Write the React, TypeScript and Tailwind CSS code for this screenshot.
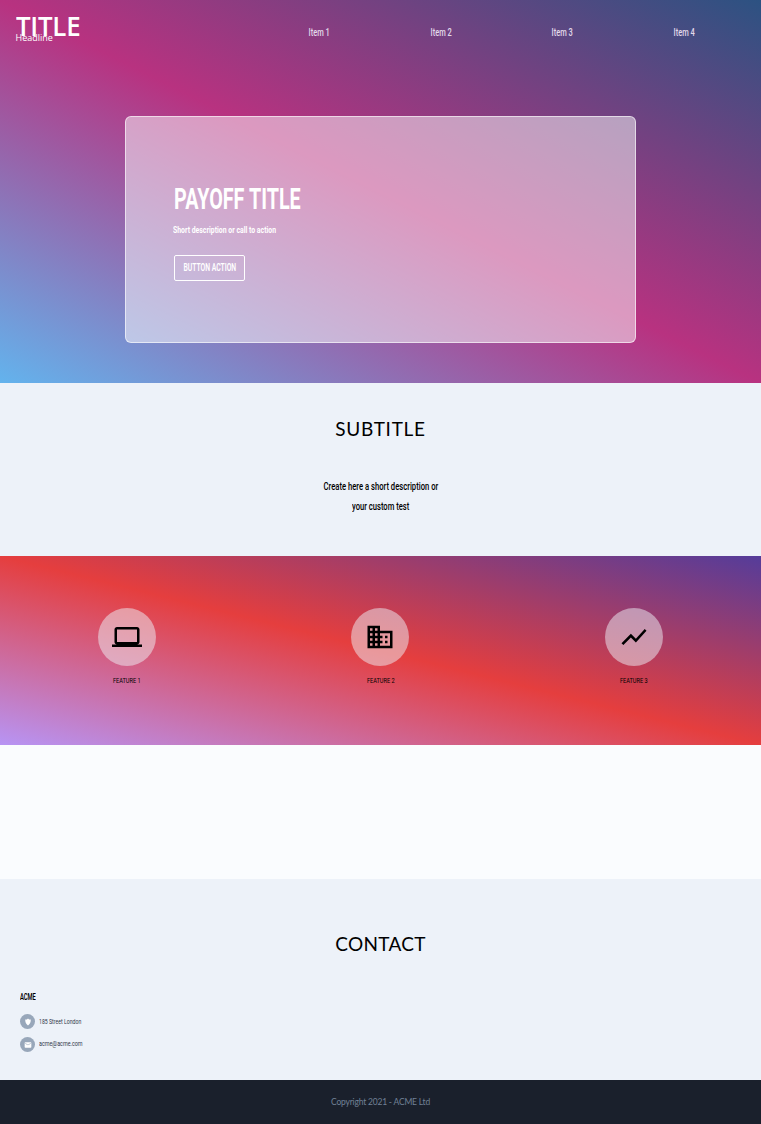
import React from "react";
import { MdLaptop, MdBusiness, MdShowChart, MdEmail } from "react-icons/md";

const condensed = "inline-block whitespace-nowrap font-['Roboto']";

const navItems = ["Item 1", "Item 2", "Item 3", "Item 4"];
const features = [
  { label: "FEATURE 1", Icon: MdLaptop },
  { label: "FEATURE 2", Icon: MdBusiness },
  { label: "FEATURE 3", Icon: MdShowChart },
];

function ShieldIcon() {
  return (
    <svg viewBox="0 0 20 20" className="h-2 w-2" fill="currentColor">
      <path d="M10 19C5 15 3 11 3 4q5 0 7-3 2 3 7 3c0 7-2 11-7 15Z" />
    </svg>
  );
}

export default function App() {
  return (
    <div className="h-[1124px] w-full overflow-hidden bg-[#fafcfe] font-['Roboto',sans-serif] text-black">
      <header className="flex h-[383px] flex-col bg-[linear-gradient(to_top_right,#63b3ed,#b83280,#2c5282)] text-white">
        <nav className="flex h-[116.4px] items-start">
          <div className="w-[258.5px] pt-[10px] pl-[15.5px] font-['Open_Sans']">
            <div className="h-[23px] origin-left scale-x-[0.96] text-[27px] leading-[31px] font-semibold tracking-[-0.3px]">TITLE</div>
            <div className="text-[9px] leading-[10px] font-medium">Headline</div>
          </div>
          <ul className="flex w-[488px] pt-[26px] text-[#e2d9ea]">
            {navItems.map((item) => (
              <li key={item} className="w-[121.6px] text-center text-[10px] leading-[14px] font-medium">
                <span className={`${condensed} scale-x-[0.75]`}>{item}</span>
              </li>
            ))}
          </ul>
        </nav>
        <div className="mx-auto flex h-[227px] w-[511px] flex-col items-start rounded-[6px] border border-white/60 bg-white/50 pt-[65px] pl-12">
          <h1 className={`${condensed} origin-left scale-x-[0.682] text-[29px] leading-[34px] font-bold`}>PAYOFF TITLE</h1>
          <p className={`${condensed} mt-[7px] -ml-px origin-left scale-x-[0.725] text-[9.5px] leading-[14px] font-bold`}>
            Short description or call to action
          </p>
          <button className="mt-[17.5px] flex h-[26px] w-[71px] items-center justify-center rounded-[2px] border border-white pt-px text-[10px] leading-[24px] font-semibold">
            <span className={`${condensed} scale-x-[0.68]`}>BUTTON ACTION</span>
          </button>
        </div>
      </header>

      <section className="flex h-[173px] flex-col items-center bg-[#edf2f9] pt-[34px]">
        <h2 className="font-['Lato'] text-[19px] leading-6 tracking-[0.7px]">SUBTITLE</h2>
        <div className="mt-[36px] text-center text-[10px] leading-5 font-medium">
          <div><span className={`${condensed} scale-x-[0.765]`}>Create here a short description or</span></div>
          <div><span className={`${condensed} scale-x-[0.76]`}>your custom test</span></div>
        </div>
      </section>

      <section className="grid h-[189px] grid-cols-3 bg-[linear-gradient(to_top_right,#b794f4,#e53e3e,#553c9a)] pt-[51.5px]">
        {features.map(({ label, Icon }) => (
          <div key={label} className="flex flex-col items-center">
            <div className="flex h-[58px] w-[58px] items-center justify-center rounded-full bg-[#edf2f7]/50">
              <Icon size={30} />
            </div>
            <span className={`${condensed} mt-[9px] scale-x-[0.7] text-[8px] leading-3`}>{label}</span>
          </div>
        ))}
      </section>

      <section className="h-[134px]" />

      <section className="flex h-[201px] flex-col bg-[#edf2f9] pt-[53px]">
        <h2 className="text-center font-['Lato'] text-[19px] leading-6 tracking-[0.3px]">CONTACT</h2>
        <div className="flex flex-col items-start pt-[35px] pl-5">
          <span className={`${condensed} origin-left scale-x-[0.64] text-[9px] leading-3 font-semibold`}>ACME</span>
          <div className="mt-[11.4px] flex items-center gap-1">
            <span className="flex h-[15px] w-[15px] items-center justify-center rounded-full bg-[#98a7ba] text-white"><ShieldIcon /></span>
            <span className={`${condensed} origin-left scale-x-[0.74] text-[7px] leading-[10px] text-[#2d3748]`}>185 Street London</span>
          </div>
          <div className="mt-2 flex items-center gap-1">
            <span className="flex h-[15px] w-[15px] items-center justify-center rounded-full bg-[#98a7ba] text-white"><MdEmail size={8} /></span>
            <span className={`${condensed} -mt-0.5 origin-left scale-x-[0.77] text-[7px] leading-[10px] text-[#2d3748]`}>acme@acme.com</span>
          </div>
        </div>
      </section>

      <footer className="h-[44px] bg-[#1a202c] pt-[16px] text-center font-['Lato'] text-[8.5px] leading-3 tracking-[-0.2px] text-[#718096]">
        Copyright 2021 - ACME Ltd
      </footer>
    </div>
  );
}
